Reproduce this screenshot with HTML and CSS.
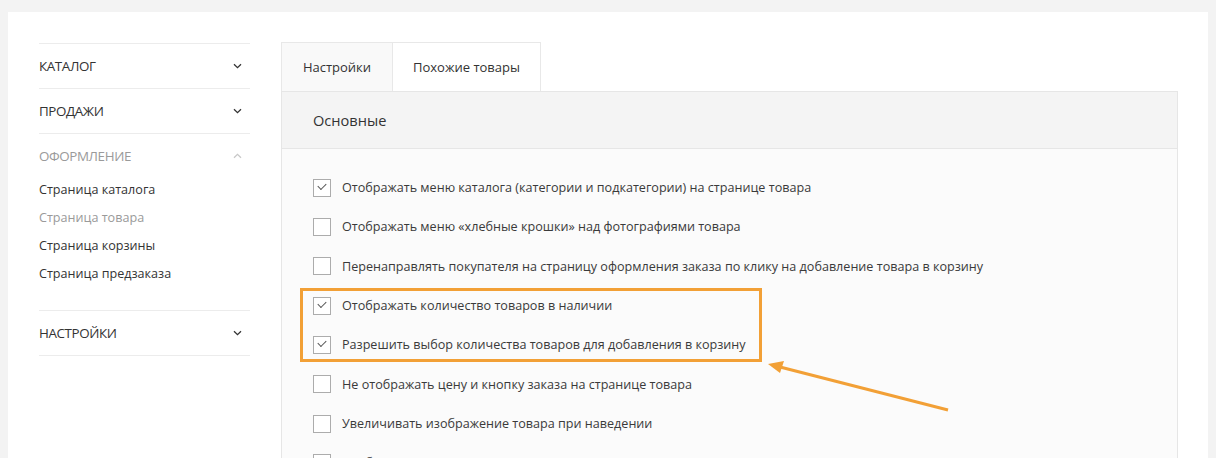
FILE: index.html
```html
<!DOCTYPE html>
<html lang="ru">
<head>
<meta charset="utf-8">
<link rel="stylesheet" href="styles.css">
</head>
<body>
<div class="card">
  <aside class="sidebar">
    <div class="nav-item">
      <div class="nav-head"><span>КАТАЛОГ</span><svg class="chev" width="9" height="6" viewBox="0 0 9 6"><path d="M1 1.2 L4.5 4.6 L8 1.2" /></svg></div>
    </div>
    <div class="nav-item">
      <div class="nav-head"><span>ПРОДАЖИ</span><svg class="chev" width="9" height="6" viewBox="0 0 9 6"><path d="M1 1.2 L4.5 4.6 L8 1.2" /></svg></div>
    </div>
    <div class="nav-item open">
      <div class="nav-head muted"><span>ОФОРМЛЕНИЕ</span><svg class="chev up" width="9" height="6" viewBox="0 0 9 6"><path d="M1 4.8 L4.5 1.4 L8 4.8" /></svg></div>
      <ul class="sub">
        <li>Страница каталога</li>
        <li class="active">Страница товара</li>
        <li>Страница корзины</li>
        <li>Страница предзаказа</li>
      </ul>
    </div>
    <div class="nav-item last">
      <div class="nav-head"><span>НАСТРОЙКИ</span><svg class="chev" width="9" height="6" viewBox="0 0 9 6"><path d="M1 1.2 L4.5 4.6 L8 1.2" /></svg></div>
    </div>
  </aside>
  <main class="content">
    <div class="tabs">
      <div class="tab active">Настройки</div>
      <div class="tab">Похожие товары</div>
    </div>
    <section class="panel">
      <div class="panel-head">Основные</div>
      <div class="panel-body">
        <label class="row"><span class="cb checked"></span>Отображать меню каталога (категории и подкатегории) на странице товара</label>
        <label class="row"><span class="cb"></span>Отображать меню «хлебные крошки» над фотографиями товара</label>
        <label class="row"><span class="cb"></span>Перенаправлять покупателя на страницу оформления заказа по клику на добавление товара в корзину</label>
        <label class="row"><span class="cb checked"></span>Отображать количество товаров в наличии</label>
        <label class="row"><span class="cb checked"></span>Разрешить выбор количества товаров для добавления в корзину</label>
        <label class="row"><span class="cb"></span>Не отображать цену и кнопку заказа на странице товара</label>
        <label class="row"><span class="cb"></span>Увеличивать изображение товара при наведении</label>
        <label class="row"><span class="cb"></span>Отображать</label>
      </div>
    </section>
  </main>
  <div class="highlight"></div>
  <svg class="arrow" width="200" height="60" viewBox="0 0 200 60">
    <line x1="182" y1="50" x2="14" y2="7" />
    <polygon points="2,4 18,1 14,13" />
  </svg>
</div>
</body>
</html>
```
FILE: styles.css
```css
html, body { margin: 0; padding: 0; }
body {
  background: #f3f3f3;
  font-family: "Open Sans", "Noto Sans", sans-serif;
  color: #333;
  height: 458px;
  overflow: hidden;
}
.card {
  position: relative;
  margin: 12px 8px 0 8px;
  background: #fff;
  display: flex;
  gap: 31px;
  padding: 31px 30px 0 31px;
  height: 600px;
}
.sidebar { width: 211px; flex: none; }
.nav-item { border-top: 1px solid #ececec; }
.nav-item.last { border-bottom: 1px solid #ececec; }
.nav-head {
  height: 44px;
  display: flex;
  align-items: center;
  justify-content: space-between;
  padding-right: 8px;
  font-size: 13.4px;
  letter-spacing: -0.4px;
  color: #333;
}
.nav-head.muted { color: #9a9a9a; }
.chev { fill: none; stroke: #333; stroke-width: 1.3; }
.chev.up { stroke: #c8c8c8; }
.sub { list-style: none; margin: -2px 0 0; padding: 0 0 22px; }
.sub li { height: 28px; line-height: 28px; font-size: 12.6px; color: #333; }
.sub li.active { color: #9a9a9a; }

.content { flex: 1; display: flex; flex-direction: column; margin-top: -1px; }
.tabs { display: flex; }
.tab {
  height: 48px;
  display: flex; align-items: center; justify-content: center;
  border: 1px solid #e8e8e8; border-bottom: none;
  font-size: 13px; color: #333;
  background: #fff;
}
.tab:first-child { width: 110px; background: #f9f9f9; }
.tab + .tab { border-left: none; width: 147px; }
.panel {
  border: 1px solid #e6e6e6;
  border-bottom: none;
  background: #fbfbfb;
  flex: 1;
}
.panel-head {
  height: 56px;
  background: #f4f4f4;
  border-bottom: 1px solid #e6e6e6;
  display: flex; align-items: center;
  padding-left: 31px;
  font-size: 14.6px; color: #333;
}
.panel-body { padding: 19px 0 0 31px; }
.row {
  height: 39.33px;
  display: flex; align-items: center;
  font-size: 12.6px; color: #3a3a3a;
}
.cb {
  width: 16px; height: 16px;
  border: 1px solid #acacac;
  background: #fff;
  margin-right: 11px;
  flex: none;
  position: relative;
}
.cb.checked::after {
  content: "";
  position: absolute;
  left: 4px; top: 3px;
  width: 7px; height: 4px;
  border-left: 1.2px solid #555;
  border-bottom: 1.2px solid #555;
  transform: rotate(-45deg);
}
.highlight {
  position: absolute;
  left: 292px; top: 276px;
  width: 456px; height: 68px;
  border: 3px solid #f2a036;
}
.arrow {
  position: absolute;
  left: 758px; top: 348px;
  overflow: visible;
}
.arrow line { stroke: #f2a036; stroke-width: 3; }
.arrow polygon { fill: #f2a036; }
```
